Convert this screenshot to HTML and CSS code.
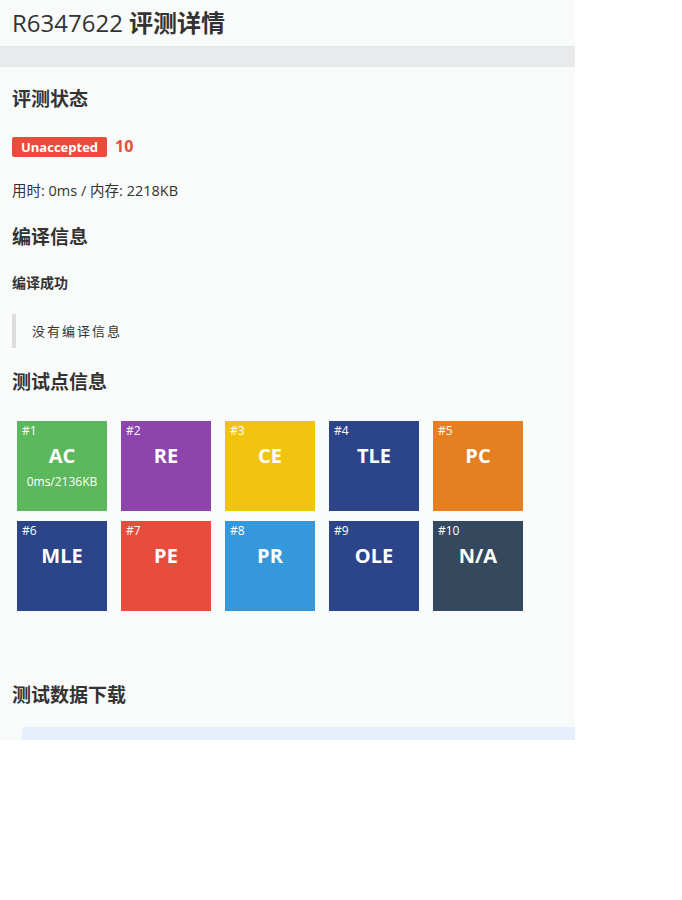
FILE: index.html
```html
<!DOCTYPE html>
<html lang="zh">
<head>
<meta charset="utf-8">
<title>R6347622 评测详情</title>
<link rel="stylesheet" href="styles.css">
</head>
<body>
<div class="page">
  <header class="title-bar">
    <h1 class="title">R6347622 <b>评测详情</b></h1>
  </header>
  <div class="grey-strip"></div>
  <main class="content">
    <h2 class="h2 h-status">评测状态</h2>
    <div class="status-row">
      <span class="badge">Unaccepted</span>
      <span class="score">10</span>
    </div>
    <p class="usage">用时: 0ms / 内存: 2218KB</p>

    <h2 class="h2 h-compile">编译信息</h2>
    <h4 class="h4">编译成功</h4>
    <blockquote class="quote">没有编译信息</blockquote>

    <h2 class="h2 h-tests">测试点信息</h2>
    <div class="tiles">
      <div class="tile ac"><span class="num">#1</span><span class="res">AC</span><span class="info">0ms/2136KB</span></div>
      <div class="tile re"><span class="num">#2</span><span class="res">RE</span></div>
      <div class="tile ce"><span class="num">#3</span><span class="res">CE</span></div>
      <div class="tile navy"><span class="num">#4</span><span class="res">TLE</span></div>
      <div class="tile pc"><span class="num">#5</span><span class="res">PC</span></div>
      <div class="tile navy"><span class="num">#6</span><span class="res">MLE</span></div>
      <div class="tile pe"><span class="num">#7</span><span class="res">PE</span></div>
      <div class="tile pr"><span class="num">#8</span><span class="res">PR</span></div>
      <div class="tile navy"><span class="num">#9</span><span class="res">OLE</span></div>
      <div class="tile na"><span class="num">#10</span><span class="res">N/A</span></div>
    </div>

    <h2 class="h2 h-download">测试数据下载</h2>
    <div class="download-box"></div>
  </main>
</div>
</body>
</html>
```
FILE: styles.css
```css
html, body {
  margin: 0;
  padding: 0;
  background: #ffffff;
}
body {
  font-family: "Open Sans", "Noto Sans CJK SC", sans-serif;
  color: #333333;
}
.page {
  width: 575px;
  background: #f9fbfa;
}
.title-bar {
  height: 47px;
  padding: 0 12px;
  box-sizing: border-box;
  border-bottom: 1px solid #dde5e8;
}
.title {
  margin: 0;
  padding-top: 7px;
  font-size: 24px;
  line-height: 32px;
  font-weight: 400;
  color: #333;
}
.title b {
  font-weight: 700;
}
.grey-strip {
  height: 20px;
  background: #e8eaeb;
}
.content {
  padding: 0 0 0 12px;
  display: flow-root;
}
.h2 {
  margin: 0;
  font-size: 19px;
  line-height: 26px;
  font-weight: 700;
  color: #333;
}
.h-status { margin-top: 19px; }
.status-row {
  margin-top: 25px;
  display: flex;
  align-items: center;
  height: 20px;
}
.badge {
  display: inline-block;
  background: #e74c3c;
  color: #fff;
  font-weight: 700;
  font-size: 13px;
  line-height: 20px;
  padding: 0 9px;
  border-radius: 2px;
}
.score {
  color: #e74c3c;
  font-weight: 700;
  font-size: 16px;
  margin-left: 8px;
  position: relative;
  top: -1px;
}
.usage {
  margin: 23px 0 0;
  font-size: 14.5px;
  line-height: 22px;
}
.h-compile { margin-top: 22px; }
.h4 {
  margin: 23px 0 0;
  font-size: 14px;
  line-height: 20px;
  font-weight: 700;
}
.quote {
  margin: 21px 0 0;
  border-left: 4px solid #dddddd;
  padding: 6px 0 6px 16px;
  font-size: 13px;
  line-height: 22px;
  letter-spacing: 2px;
  color: #333;
  font-family: "Noto Sans CJK SC", serif;
  font-weight: 400;
}
.h-tests { margin-top: 21px; }
.tiles {
  margin-top: 26px;
  padding-left: 5px;
  display: flex;
  flex-wrap: wrap;
  gap: 10px 14px;
  width: 530px;
}
.tile {
  width: 90px;
  height: 90px;
  position: relative;
  color: #fff;
  display: flex;
  flex-direction: column;
  align-items: center;
  padding-top: 22px;
  box-sizing: border-box;
}
.num {
  position: absolute;
  left: 5px;
  top: 2px;
  font-size: 12px;
  line-height: 16px;
}
.res {
  font-size: 20px;
  font-weight: 700;
  line-height: 26px;
}
.info {
  font-size: 12px;
  line-height: 16px;
  margin-top: 5px;
}
.ac { background: #5cb85c; }
.re { background: #8e44ad; }
.ce { background: #f1c40f; }
.navy { background: #2c458a; }
.pc { background: #e67e22; }
.pe { background: #e74c3c; }
.pr { background: #3498db; }
.na { background: #34495e; }
.h-download { margin-top: 71px; }
.download-box {
  margin: 19px 0 0 10px;
  height: 13px;
  background: #e6f0fc;
}
```
